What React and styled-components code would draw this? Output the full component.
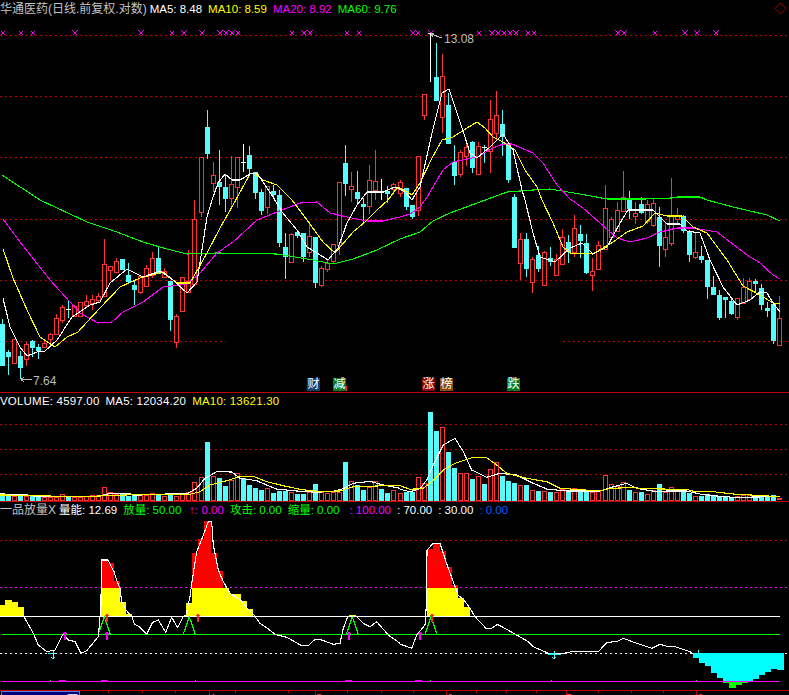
import React from 'react';
import styled, { createGlobalStyle } from 'styled-components';

const RED = '#ff3333';
const CYAN = '#54fcfc';
const GREEN = '#00ff00';
const MAGENTA = '#ff00ff';
const YELLOW = '#ffff00';
const WHITE = '#ffffff';
const GRID = '#c00000';

const GlobalStyle = createGlobalStyle`
  html, body { margin: 0; padding: 0; background: #000; }
`;

const Screen = styled.div`
  width: 789px;
  height: 695px;
  background: #000;
  overflow: hidden;
  display: flex;
  flex-direction: column;
  font-family: "Liberation Sans", "Noto Sans CJK SC", sans-serif;
  font-size: 11.5px;
  color: #fff;
`;

const Panel = styled.section`
  position: relative;
  height: ${p => p.$height}px;
  display: flex;
  flex-direction: column;
  border-bottom: 1px solid #c00000;
  box-sizing: content-box;
`;

const Legend = styled.div`
  height: ${p => p.$height || 16}px;
  flex: none;
  display: flex;
  align-items: center;
  gap: 6px;
  white-space: nowrap;
  line-height: 16px;
  letter-spacing: ${p => p.$tracking || 0}px;
`;

const Item = styled.span`
  color: ${p => p.$color || '#fff'};
  margin-left: ${p => p.$offset || 0}px;
`;

const Title = styled.span`
  color: #c4c4c4;
  font-size: 12px;
  margin-right: ${p => p.$gap || 0}px;
`;

const Diamond = styled.svg`
  margin-left: auto;
  margin-right: 2px;
  width: 13px;
  height: 13px;
  flex: none;
`;

const Chart = styled.svg`
  display: block;
  flex: 1;
  width: 789px;
  min-height: 0;
`;

const Badge = styled.span`
  position: absolute;
  left: ${p => p.$x}px;
  top: 378px;
  width: 13px;
  height: 13px;
  background: ${p => p.$bg};
  color: #fff;
  font-size: 12px;
  line-height: 13px;
  text-align: center;
`;

const Footer = styled.footer`
  height: 4px;
  flex: none;
  display: flex;
  overflow: hidden;
`;

const DateBox = styled.div`
  width: 76px;
  height: 16px;
  margin-left: 1px;
  flex: none;
  background: #000080;
  border: 1px solid #5a78d8;
  color: #fff;
  font-size: 12px;
  line-height: 16px;
  padding-left: 1px;
  box-sizing: content-box;
`;

const Axis = styled.svg`
  display: block;
  flex: 1;
  height: 4px;
`;

/* [kind, bodyTop, bodyBottom, high, low]  r=red hollow, c=cyan, w=white doji, x=cyan wick white doji */
const K = [
  ['c',324,366,319,366],['c',352,357,350,375],['r',339,363,339,363],['c',356,368,351,379],['r',344,359,342,366],
  ['c',341,348,340,357],['c',347,351,344,359],['r',343,347,340,347],['r',334,339,333,343],['r',318,334,314,334],
  ['r',307,320,305,323],['x',309,309,300,318],['r',306,316,305,317],['r',302,316,302,317],['r',301,305,295,308],
  ['r',299,303,295,310],['r',296,300,293,303],['r',264,296,239,297],['r',266,270,266,280],['r',261,272,258,272],
  ['c',259,270,259,270],['c',275,282,263,283],['c',285,290,281,305],['r',276,292,275,294],['r',268,286,265,287],
  ['r',258,275,252,278],['c',258,274,247,274],['r',271,277,268,278],['c',281,320,281,331],['r',316,342,314,348],
  ['r',277,311,277,312],['r',281,292,250,292],['r',219,284,200,285],['r',157,212,157,217],['c',127,154,110,159],
  ['r',175,183,162,192],['c',182,187,150,205],['c',187,199,175,212],['r',184,198,156,205],['r',157,187,157,208],
  ['w',162,162,144,172],['c',155,169,146,175],['c',172,193,172,199],['c',192,211,189,215],['r',186,207,186,214],
  ['c',191,195,185,199],['c',195,243,190,247],['c',247,257,233,279],['r',234,262,233,262],['c',232,236,232,238],
  ['c',233,257,233,262],['r',236,252,222,257],['c',237,283,237,288],['r',268,285,266,287],['r',263,269,260,272],
  ['r',244,261,244,264],['r',182,245,182,255],['c',163,184,145,196],['r',186,189,172,202],['c',192,199,171,205],
  ['c',204,207,198,223],['r',180,206,165,214],['r',181,190,150,200],['w',192,192,179,200],['c',191,194,186,203],
  ['r',184,189,183,192],['r',182,193,180,197],['c',188,207,188,210],['c',205,217,205,219],['r',156,210,156,216],
  ['r',94,115,94,120],['w',33,33,33,82],['c',77,101,43,101],['r',76,117,54,133],['c',105,144,93,144],
  ['c',162,176,145,185],['r',152,174,150,177],['r',147,156,140,166],['c',142,168,141,173],['r',146,174,142,174],
  ['x',147,147,145,163],['r',119,151,100,173],['r',115,133,91,140],['c',124,137,110,156],['c',144,180,144,183],
  ['c',197,248,194,248],['r',239,263,233,280],['c',239,269,233,277],['r',259,282,257,293],['c',255,269,246,272],
  ['r',252,285,251,285],['c',258,262,247,266],['r',259,275,254,275],['r',237,264,229,265],['c',242,252,235,263],
  ['r',228,252,215,257],['c',234,241,225,258],['c',243,273,234,274],['r',271,275,258,291],['r',245,269,241,270],
  ['r',208,249,185,250],['r',219,237,217,238],['r',210,231,202,232],['r',197,211,171,212],['c',199,209,191,219],
  ['r',213,216,202,224],['c',204,213,197,214],['r',204,221,200,224],['r',203,225,198,227],['c',217,246,207,267],
  ['r',237,249,223,257],['r',216,243,178,246],['r',216,219,208,223],['c',216,231,215,233],['c',232,255,230,262],
  ['r',252,257,233,259],['c',256,260,246,263],['c',260,287,260,299],['c',287,295,276,295],['c',295,318,290,320],
  ['c',297,300,297,318],['c',301,314,298,315],['r',298,317,298,320],['r',287,303,278,303],['r',281,299,278,300],
  ['c',281,284,279,293],['c',288,305,284,310],['c',308,311,302,317],['c',304,341,302,344],['r',318,345,296,345],
];

const slotX = k => Math.floor(k * 6.03 + 0.02);

const MA60 = [[2,175],[40,200],[87,222],[117,232],[143,242],[167,249],[187,254],[217,253],[277,254],[313,260],[333,264],[353,259],[377,250],[400,239],[420,232],[433,221],[450,213],[488,199],[507,192],[533,190],[550,189],[580,194],[607,199],[645,199],[672,198],[677,197],[700,197],[707,200],[733,207],[767,215],[780,221]];
const MA20 = [[3,219],[20,242],[50,280],[80,313],[98,323],[112,322],[123,312],[143,302],[163,287],[187,284],[200,273],[217,253],[233,242],[257,220],[277,212],[300,203],[317,202],[330,213],[347,217],[367,221],[383,221],[400,217],[410,214],[420,207],[427,197],[443,170],[453,162],[477,157],[493,148],[503,144],[512,144],[533,153],[543,163],[557,185],[570,199],[583,208],[600,223],[617,238],[630,242],[647,238],[660,232],[677,228],[693,228],[717,232],[747,255],[760,263],[773,275],[780,279]];
const MA10 = [[3,249],[13,278],[27,310],[40,337],[55,347],[67,337],[78,332],[87,322],[100,308],[120,287],[140,278],[163,272],[177,283],[190,283],[207,253],[220,228],[233,205],[250,174],[254,173],[263,180],[277,185],[292,200],[307,220],[323,242],[335,253],[353,232],[365,222],[377,210],[388,200],[397,188],[400,188],[412,195],[420,183],[432,158],[442,140],[453,137],[467,128],[477,122],[485,128],[493,137],[503,142],[515,150],[525,170],[537,187],[542,200],[553,223],[563,247],[570,253],[593,254],[613,242],[627,232],[643,226],[655,213],[667,216],[682,216],[693,227],[707,233],[727,260],[743,286],[760,295],[773,303],[780,304]];
const MA5 = [[3,298],[10,327],[20,347],[27,356],[37,352],[45,351],[57,340],[72,317],[90,305],[100,302],[110,283],[127,269],[143,277],[160,271],[173,280],[187,293],[197,282],[207,217],[212,200],[218,183],[225,174],[232,180],[240,180],[250,174],[257,173],[273,197],[282,212],[297,230],[307,247],[317,253],[328,260],[338,248],[347,223],[357,205],[367,192],[383,192],[395,187],[405,192],[412,200],[420,187],[432,133],[442,93],[449,89],[457,113],[465,137],[470,153],[477,158],[490,147],[503,134],[513,150],[522,190],[525,200],[533,233],[540,257],[555,262],[570,248],[582,243],[593,254],[607,247],[620,223],[628,210],[653,210],[667,224],[680,224],[687,231],[700,233],[710,260],[723,287],[737,305],[750,300],[760,292],[767,293],[773,303],[780,312]];

const XS_BOLD = [75,141,184,202,220,226,232,304,310,413,431,492,498,510,516,618,624,685,697,716];
const XS_THIN = [3,21,33,172,238,292,347,359,418,479,504,528,534,655];

const VOL_TOPS = [315,315,318,317,318,315,318,321,321,321,313,318,321,320,318,316,316,292,306,312,313,318,316,316,316,310,313,318,310,318,310,306,277,262,156,258,264,288,270,250,265,285,294,300,294,309,303,302,307,312,312,306,282,306,310,306,305,216,274,285,300,290,274,298,309,300,310,306,306,262,278,67,123,112,186,234,250,250,267,258,282,238,217,258,273,279,286,285,300,303,303,306,306,296,300,295,303,306,306,304,256,283,288,277,300,306,306,313,301,282,306,292,303,306,309,318,318,313,318,318,318,321,318,316,316,318,316,320,316,324];

const VOL_W1 = [0,312,70,313,100,318,150,318,200,321,300,318,330,310,390,310,400,316,500,312,560,312,590,295,615,265,650,245,695,246,720,265,770,272,800,285,830,297,860,300,900,304,950,307,1000,304,1030,296,1060,280,1110,274,1150,285,1200,295];
const VOL_W2 = [0,298,30,305,60,296,80,270,100,225,130,165,165,145,190,185,215,240,260,262,300,250,350,255,400,280,440,297,500,303,600,303,630,293,680,280,710,295,770,305,800,303,860,303,900,312,950,318,1000,322,1140,320];
const VOL_Y1 = [0,315,100,316,200,320,300,318,400,314,500,314,570,313,600,305,630,285,680,272,720,259,760,259,800,275,850,287,900,298,950,304,1020,303,1060,290,1200,286];
const VOL_Y2 = [0,287,30,298,70,295,100,270,130,240,165,220,215,203,258,202,290,225,320,250,380,265,440,275,480,295,600,303,630,295,690,293,780,297,860,298,880,304,940,305,1000,312,1140,320];

const ENERGY1 = [72,350,100,400,115,435,140,455,165,450,190,400,205,420,225,425,243,460,260,452,295,410,300,350,303,315,304,180,324,180,342,215,350,240,360,265,365,305,378,330,396,350,403,372,420,382,440,403,458,367,475,360,497,397,515,352,533,383,550,350,558,345,570,290,576,245,590,155,612,100,625,65,635,65,640,135,655,210,670,245,690,280,722,300,742,325,762,345,780,370,805,387,825,403,860,412,905,437,925,437,945,418,965,420,1000,433,1020,430,1030,385,1043,350,1070,350,1090,370,1110,380,1130,365,1165,405,1200,430];
const ENERGY2 = [0,432,35,445,50,405,75,375,80,300,81,150,100,130,120,130,138,185,156,235,174,285,192,300,210,325,225,350,258,385,275,385,292,373,320,388,385,425,400,440,445,460,480,462,515,455,595,455,620,428,655,423,670,415,710,430,755,445,780,433,805,440,825,440,870,455,880,463];

/* [x0,x1,top,bottom] in 3x crop units */
const BLOCKS_L = {
  yellow: [[0,15,315,350],[15,36,300,350],[36,54,305,350],[54,72,321,350],[303,360,263,350],[360,378,306,350],[378,396,342,350],[558,576,309,350],[576,687,263,350],[687,723,282,350],[723,741,303,350],[741,759,327,350],[1047,1068,345,350]],
  red: [[303,324,180,263],[324,342,188,263],[342,360,243,263],[576,594,159,263],[594,612,117,263],[612,633,63,263],[633,651,159,263],[651,669,213,263]],
};
const BLOCKS_R = {
  yellow: [[81,174,263,350],[174,192,294,350],[192,210,321,350]],
  red: [[81,99,147,263],[99,120,129,263],[120,138,153,263],[138,156,201,263],[156,174,255,263]],
  cyan: [[878,897,460,473],[897,915,460,490],[915,933,460,497],[933,951,460,518],[951,969,460,534],[969,1060,460,544],[1060,1078,460,537],[1078,1096,460,525],[1096,1114,460,517],[1114,1132,460,507],[1132,1152,460,510],[444,483,459,464]],
  green: [[969,987,544,549],[987,1008,544,563],[1008,1026,544,556],[1026,1044,544,549]],
};

const pts = a => a.map(p => p.join(',')).join(' ');
const crop = (ox, oy, flat) => {
  const out = [];
  for (let i = 0; i < flat.length; i += 2) out.push(`${(ox + flat[i] / 3).toFixed(1)},${(oy + flat[i + 1] / 3).toFixed(1)}`);
  return out.join(' ');
};

const Line = ({ points, color }) => (
  <polyline points={points} fill="none" stroke={color} strokeWidth="1.1" shapeRendering="crispEdges" />
);

const Dotted = ({ y, x1 = 0, x2 = 789, color = GRID }) => (
  <line x1={x1} x2={x2} y1={y + 0.5} y2={y + 0.5} stroke={color} strokeDasharray="2 3" shapeRendering="crispEdges" />
);

const Solid = ({ y, x1, x2, color }) => (
  <line x1={x1} x2={x2} y1={y + 0.5} y2={y + 0.5} stroke={color} shapeRendering="crispEdges" />
);

const Candle = ({ k, data }) => {
  const [kind, top, bot, hi, lo] = data;
  const x = slotX(k);
  const mid = x + 2.5;
  if (kind === 'w' || kind === 'x') {
    return (
      <g shapeRendering="crispEdges">
        <line x1={mid} x2={mid} y1={hi} y2={lo} stroke={kind === 'w' ? WHITE : CYAN} />
        <line x1={x} x2={x + 5} y1={top + 0.5} y2={top + 0.5} stroke={WHITE} />
      </g>
    );
  }
  if (kind === 'c') {
    return (
      <g shapeRendering="crispEdges">
        <line x1={mid} x2={mid} y1={hi} y2={lo} stroke={CYAN} />
        <rect x={x} y={top} width={5} height={bot - top} fill={CYAN} />
      </g>
    );
  }
  return (
    <g shapeRendering="crispEdges">
      <line x1={mid} x2={mid} y1={hi} y2={lo} stroke={RED} />
      <rect x={x + 0.5} y={top + 0.5} width={4} height={bot - top} fill="#000" stroke={RED} />
    </g>
  );
};

const VolumeBar = ({ k, top, kind }) => {
  const x = slotX(k);
  const y = 390 + top / 3;
  if (k === 129) return <rect x={x} y={y} width={5} height={500 - y} fill={RED} shapeRendering="crispEdges" />;
  if (kind === 'r') return <rect x={x + 0.5} y={Math.round(y) + 0.5} width={4} height={500 - Math.round(y)} fill="#000" stroke={RED} shapeRendering="crispEdges" />;
  return <rect x={x} y={Math.round(y)} width={5} height={500.5 - Math.round(y)} fill={CYAN} shapeRendering="crispEdges" />;
};

const XMark = ({ x, bold }) => {
  const r = bold ? 2.5 : 2;
  return (
    <g stroke={MAGENTA} strokeWidth="1.3" shapeRendering="crispEdges">
      <path d={`M${x - r} ${33 - r} L${x + r} ${33 + r} M${x + r} ${33 - r} L${x - r} ${33 + r}`} fill="none" />
      {bold && <rect x={x - 1} y={32} width={2} height={2} fill={MAGENTA} stroke="none" />}
    </g>
  );
};

const Blocks = ({ ox, list, color }) => list.map(([a, b, t, d], i) => (
  <rect key={i} x={ox + a / 3} y={500 + t / 3} width={(b - a) / 3} height={(d - t) / 3} fill={color} shapeRendering="crispEdges" />
));

const Arrow = ({ x, y1, y2, color }) => (
  <path d={`M${x} ${y1} L${x} ${y2} M${x - 2} ${y1 + 2} L${x} ${y1} L${x + 2} ${y1 + 2}`} fill="none" stroke={color} strokeWidth="1.3" shapeRendering="crispEdges" />
);

const PriceNote = ({ x, y, children }) => (
  <text x={x} y={y} fill="#bdbdbd" fontFamily="'Liberation Sans', sans-serif" fontSize="12">{children}</text>
);

const KlineChart = () => (
  <Chart viewBox="0 17 789 375">
    {[35, 96, 157, 219, 280].map(y => <Dotted key={y} y={y} />)}
    <Dotted y={341} x2={226} />
    <Dotted y={341} x1={563} x2={789} />
    {XS_BOLD.map(x => <XMark key={x} x={x} bold />)}
    {XS_THIN.map(x => <XMark key={x} x={x} />)}
    {K.map((d, k) => <Candle key={k} k={k} data={d} />)}
    <Line points={pts(MA60)} color={GREEN} />
    <Line points={pts(MA20)} color={MAGENTA} />
    <Line points={pts(MA10)} color={YELLOW} />
    <Line points={pts(MA5)} color={WHITE} />
    <path d="M431 34 L442 38 M431 34 L434 33 M431 34 L433 37" fill="none" stroke="#bdbdbd" shapeRendering="crispEdges" />
    <PriceNote x={444} y={43}>13.08</PriceNote>
    <path d="M21 379.5 L32 379.5 M21 379.5 L24 377 M21 379.5 L24 382" fill="none" stroke="#bdbdbd" shapeRendering="crispEdges" />
    <PriceNote x={33} y={385}>7.64</PriceNote>
    <rect x={345} y={386} width={2} height={5} fill={RED} />
  </Chart>
);

const VolumeChart = () => (
  <Chart viewBox="0 409 789 92">
    {[424, 449, 474].map(y => <Dotted key={y} y={y} />)}
    {VOL_TOPS.map((t, k) => <VolumeBar key={k} k={k} top={t} kind={K[k][0] === 'r' ? 'r' : 'c'} />)}
    <Line points={crop(0, 390, VOL_W1)} color={WHITE} />
    <Line points={crop(400, 390, VOL_W2)} color={WHITE} />
    <Line points={crop(0, 390, VOL_Y1)} color={YELLOW} />
    <Line points={crop(400, 390, VOL_Y2)} color={YELLOW} />
  </Chart>
);

const IndicatorChart = () => (
  <Chart viewBox="0 518 789 172">
    <Dotted y={540} />
    <Dotted y={587} color={MAGENTA} />
    <Dotted y={653} color={WHITE} />
    <Blocks ox={0} list={BLOCKS_L.yellow} color={YELLOW} />
    <Blocks ox={0} list={BLOCKS_L.red} color="#ff0000" />
    <Blocks ox={400} list={BLOCKS_R.yellow} color={YELLOW} />
    <Blocks ox={400} list={BLOCKS_R.red} color="#ff0000" />
    <Blocks ox={400} list={BLOCKS_R.cyan} color="#00ffff" />
    <Blocks ox={400} list={BLOCKS_R.green} color={GREEN} />
    <Solid y={616} x1={0} x2={780} color={WHITE} />
    <Solid y={634} x1={2} x2={780} color={GREEN} />
    <Solid y={681} x1={2} x2={780} color={MAGENTA} />
    <Line points={crop(0, 500, [295,403,313,350,331,403])} color={GREEN} />
    <Line points={crop(0, 500, [550,403,568,350,586,403])} color={GREEN} />
    <Line points={crop(0, 500, [1039,403,1057,350,1075,403])} color={GREEN} />
    <Line points={crop(400, 500, [75,403,93,350,111,403])} color={GREEN} />
    <Line points={crop(0, 500, ENERGY1)} color={WHITE} />
    <Line points={crop(400, 500, ENERGY2)} color={WHITE} />
    {[65, 107, 349, 420].map(x => <Arrow key={x} x={x} y1={632} y2={640} color={MAGENTA} />)}
    {[107, 198, 432].map(x => <Arrow key={x} x={x} y1={614} y2={622} color="#ff2020" />)}
    {[53, 554].map(x => (
      <g key={x}>
        <line x1={x - 5} x2={x + 2} y1={653.5} y2={653.5} stroke={CYAN} shapeRendering="crispEdges" />
        <path d={`M${x} 651 L${x} 659 M${x - 2} 657 L${x} 659 L${x + 2} 657`} fill="none" stroke={CYAN} shapeRendering="crispEdges" />
      </g>
    ))}
    <line x1={698} x2={698} y1={650} y2={654} stroke={CYAN} shapeRendering="crispEdges" />
    {[[59, 66], [101, 108], [345, 352], [415, 422]].map(([a, b]) => (
      <line key={a} x1={a} x2={b} y1={680.5} y2={680.5} stroke={MAGENTA} shapeRendering="crispEdges" />
    ))}
    {[50, 195, 430, 551, 696].map(x => (
      <line key={x} x1={x + 0.5} x2={x + 0.5} y1={680} y2={681} stroke={GREEN} shapeRendering="crispEdges" />
    ))}
  </Chart>
);

const TICKS = [106, 140, 173, 233, 287, 346, 380, 412, 475, 505, 535, 597, 631, 663];
const MAJOR = [207, 314, 445, 565, 696];
const DASHES = [[211, 2], [316, 4], [448, 3], [566, 5], [699, 3]];

const TimeAxis = () => (
  <Axis viewBox="78 691 711 4">
    {TICKS.map(x => <line key={x} x1={x + 0.5} x2={x + 0.5} y1={691} y2={693} stroke="#c00000" shapeRendering="crispEdges" />)}
    {MAJOR.map(x => <line key={x} x1={x + 0.5} x2={x + 0.5} y1={691} y2={695} stroke="#c00000" shapeRendering="crispEdges" />)}
    {DASHES.map(([x, w]) => <rect key={x} x={x} y={694} width={w} height={1} fill={RED} />)}
  </Axis>
);

export default function App() {
  return (
    <>
      <GlobalStyle />
      <Screen>
        <Panel $height={392}>
          <Legend $height={17}>
            <Title $gap={-3}>华通医药(日线.前复权.对数)</Title>
            <Item>MA5: 8.48</Item>
            <Item $color={YELLOW}>MA10: 8.59</Item>
            <Item $color={MAGENTA}>MA20: 8.92</Item>
            <Item $color={GREEN}>MA60: 9.76</Item>
            <Diamond viewBox="0 0 13 13">
              <path d="M6.5 1 L12 6.5 L6.5 12 L1 6.5 Z" fill="none" stroke="#b00000" />
            </Diamond>
          </Legend>
          <KlineChart />
          <Badge $x={307} $bg="#14406e">财</Badge>
          <Badge $x={333} $bg="#0a7a1e">减</Badge>
          <Badge $x={422} $bg="#840a0a">涨</Badge>
          <Badge $x={440} $bg="#8a4a08">榜</Badge>
          <Badge $x={507} $bg="#0a7a1e">跌</Badge>
        </Panel>
        <Panel $height={108}>
          <Legend $tracking={0.2}>
            <Item>VOLUME: 4597.00</Item>
            <Item>MA5: 12034.20</Item>
            <Item $color={YELLOW}>MA10: 13621.30</Item>
          </Legend>
          <VolumeChart />
        </Panel>
        <Panel $height={188}>
          <Legend>
            <Title $gap={-3}>一品放量X</Title>
            <Item>量能: 12.69</Item>
            <Item $color={GREEN}>放量: 50.00</Item>
            <Item $color={MAGENTA} $offset={2}>↑: 0.00</Item>
            <Item $color={GREEN}>攻击: 0.00</Item>
            <Item $color={GREEN}>缩量: 0.00</Item>
            <Item $color={MAGENTA} $offset={4}>: 100.00</Item>
            <Item>: 70.00</Item>
            <Item>: 30.00</Item>
            <Item $color="#0a5cff">: 0.00</Item>
          </Legend>
          <IndicatorChart />
        </Panel>
        <Footer>
          <DateBox>2016/08/08/四</DateBox>
          <TimeAxis />
        </Footer>
      </Screen>
    </>
  );
}
